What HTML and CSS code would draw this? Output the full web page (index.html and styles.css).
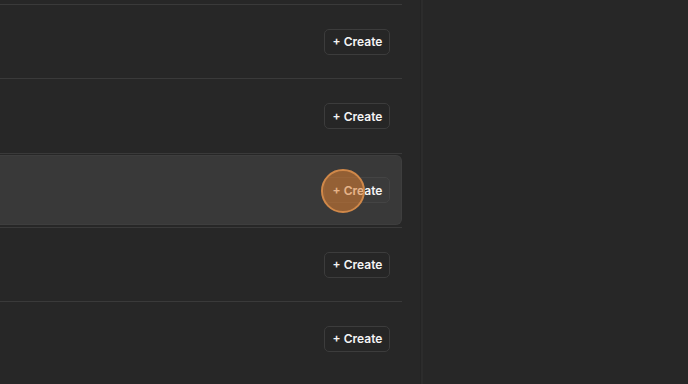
FILE: index.html
```html
<!DOCTYPE html>
<html lang="en">
  <head>
    <meta charset="UTF-8" />
    <meta name="viewport" content="width=device-width, initial-scale=1.0" />
    <title>Templates</title>
    <link rel="stylesheet" href="styles.css">
  </head>
  <body>
    <div class="page">
      <ul class="list">
        <li class="row">
          <button class="create">+ Create</button>
        </li>
        <li class="row tall">
          <button class="create">+ Create</button>
        </li>
        <li class="row hover">
          <div class="row-bg">
            <button class="create">+ Create</button>
            <span class="cursor"></span>
          </div>
        </li>
        <li class="row">
          <button class="create">+ Create</button>
        </li>
        <li class="row">
          <button class="create">+ Create</button>
        </li>
      </ul>
      <div class="divider"></div>
      <div class="side"></div>
    </div>
  </body>
</html>
```

FILE: styles.css
```css
html, body {
  margin: 0;
  padding: 0;
  height: 100%;
  background: #272727;
  font-family: Inter, "Liberation Sans", sans-serif;
}

.page {
  display: flex;
  height: 384px;
  overflow: hidden;
}

.list {
  list-style: none;
  margin: 0;
  padding: 0;
  width: 402px;
  flex: none;
  border-top: 1px solid #3a3a3a;
  margin-top: 4px;
}

.row {
  height: 73px;
  border-bottom: 1px solid #3a3a3a;
  display: flex;
  align-items: center;
  justify-content: flex-end;
  padding-right: 12px;
}

.row.tall {
  height: 74px;
}

.row:last-child {
  border-bottom: none;
}

.row.hover {
  padding: 0;
}

.row-bg {
  position: relative;
  flex: 1;
  margin: 1px 0 2px;
  height: 68px;
  background: #393939;
  border: 1px solid #3e3e3e;
  border-left: none;
  border-radius: 0 6px 6px 0;
  display: flex;
  align-items: center;
  justify-content: flex-end;
  padding-right: 11px;
}

.create {
  font-family: inherit;
  font-size: 12px;
  font-weight: 600;
  color: #f4f4f4;
  background: #262626;
  border: 1px solid #3c3c3c;
  border-radius: 5px;
  height: 26px;
  width: 66px;
  padding: 0 0 0 1px;
  cursor: pointer;
}

.row.hover .create {
  background: #3b3b3b;
  border-color: #444;
}

.cursor {
  position: absolute;
  left: 321px;
  top: 13px;
  width: 40px;
  height: 40px;
  border-radius: 50%;
  background: rgba(222, 128, 50, 0.55);
  border: 2px solid #d08849;
}

.divider {
  width: 2px;
  margin-left: 18px;
  background: #2c2c2c;
  border-left: 1px solid #242424;
}

.side {
  flex: 1;
  background: #272727;
}
```
